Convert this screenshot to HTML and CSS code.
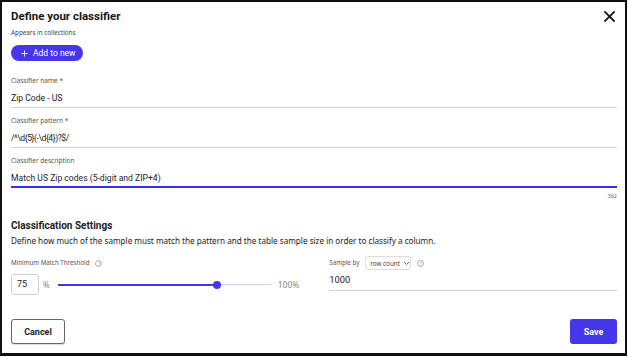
FILE: index.html
```html
<!DOCTYPE html>
<html lang="en">
<head>
<meta charset="utf-8">
<title>Define your classifier</title>
<link rel="stylesheet" href="styles.css">
</head>
<body>
<div class="frame">
  <div class="header">
    <h1 class="title">Define your classifier</h1>
    <button class="close" aria-label="Close">
      <svg width="11" height="11" viewBox="0 0 11 11"><path d="M1 1L10 10M10 1L1 10" stroke="#1a1a1a" stroke-width="1.8" stroke-linecap="square"/></svg>
    </button>
  </div>
  <div class="small-label">Appears in collections</div>
  <button class="pill">
    <svg width="7" height="7" viewBox="0 0 8 8"><path d="M4 0.5V7.5M0.5 4H7.5" stroke="#fff" stroke-width="1"/></svg>
    <span>Add to new</span>
  </button>

  <div class="field first">
    <div class="label">Classifier name *</div>
    <div class="value">Zip Code - US</div>
  </div>
  <div class="field">
    <div class="label">Classifier pattern *</div>
    <div class="value pattern">/^\d{5}(-\d{4})?$/</div>
  </div>
  <div class="field active">
    <div class="label">Classifier description</div>
    <div class="value">Match US Zip codes (5-digit and ZIP+4)</div>
  </div>
  <div class="counter">362</div>

  <h2 class="section-title">Classification Settings</h2>
  <p class="section-desc">Define how much of the sample must match the pattern and the table sample size in order to classify a column.</p>

  <div class="settings">
    <div class="col">
      <div class="row-label">
        <span class="label strong">Minimum Match Threshold</span>
        <span class="help">?</span>
      </div>
      <div class="threshold">
        <div class="num-input">75</div>
        <span class="pct">%</span>
        <div class="slider">
          <div class="fill" style="width:75%"></div>
          <div class="thumb" style="left:75%"></div>
        </div>
        <span class="max">100%</span>
      </div>
    </div>
    <div class="col">
      <div class="row-label">
        <span class="label strong">Sample by</span>
        <span class="select">row count
          <svg width="7" height="5" viewBox="0 0 7 5"><path d="M1 1L3.5 3.5L6 1" stroke="#555" stroke-width="0.9" fill="none"/></svg>
        </span>
        <span class="help">?</span>
      </div>
      <div class="sample-value">1000</div>
    </div>
  </div>

  <div class="footer">
    <button class="btn cancel">Cancel</button>
    <button class="btn save">Save</button>
  </div>
</div>
</body>
</html>
```
FILE: styles.css
```css
* { box-sizing: border-box; }
html, body { margin: 0; padding: 0; background: #fff; }
body {
  width: 628px;
  height: 358px;
  font-family: "Noto Sans", "Open Sans", sans-serif;
  color: #1c1c1c;
}
.frame {
  width: 627px;
  height: 356px;
  border: 2px solid #111;
  border-bottom-width: 3px;
  padding: 4px 8px 0 9px;
  display: flex;
  flex-direction: column;
}
.header {
  display: flex;
  justify-content: space-between;
  align-items: center;
  height: 20px;
}
.title {
  margin: 0;
  font-family: "Roboto", sans-serif;
  font-size: 11.5px;
  font-weight: 700;
  line-height: 20px;
  color: #161616;
}
.close {
  border: 0;
  background: none;
  padding: 0;
  margin-right: 2px;
  width: 11px;
  height: 11px;
  display: flex;
}
.small-label {
  margin-top: 2px;
  font-size: 6.3px;
  line-height: 10px;
  color: #444;
}
.pill {
  margin-top: 7px;
  align-self: flex-start;
  height: 16px;
  width: 72px;
  border: 0;
  border-radius: 8px;
  background: #4636e9;
  color: #fff;
  font-family: "Roboto", sans-serif;
  font-size: 8.5px;
  white-space: nowrap;
  display: flex;
  align-items: center;
  gap: 5px;
  padding: 0 0 0 10px;
}
.field {
  margin-top: 8px;
  border-bottom: 1px solid #cfcfcf;
  padding-bottom: 2px;
}
.field.first { margin-top: 15px; }
.field.active {
  border-bottom: 2px solid #3a2ee6;
  padding-bottom: 1px;
}
.label {
  font-size: 6.5px;
  line-height: 10px;
  color: #555;
}
.value {
  margin-top: 5px;
  font-family: "Roboto", sans-serif;
  font-size: 8.6px;
  line-height: 14px;
  color: #1c1c1c;
}
.value.pattern { letter-spacing: -0.45px; }
.counter {
  margin-top: 4px;
  text-align: right;
  font-size: 5.5px;
  line-height: 8px;
  color: #666;
}
.section-title {
  margin: 19px 0 0;
  font-family: "Roboto", sans-serif;
  font-size: 10px;
  font-weight: 700;
  line-height: 14px;
  color: #1c1c1c;
}
.section-desc {
  margin: 3px 0 0;
  font-size: 8.15px;
  line-height: 10px;
  color: #222;
}
.settings {
  margin-top: 10px;
  display: grid;
  grid-template-columns: 1fr 1fr;
  gap: 30px;
}
.row-label {
  height: 14px;
  display: flex;
  align-items: center;
  gap: 6px;
}
.label.strong { color: #555; font-size: 6.2px; }
.help {
  width: 7px;
  height: 7px;
  border: 0.7px solid #aaa;
  border-radius: 50%;
  font-size: 5px;
  line-height: 6px;
  text-align: center;
  color: #999;
}
.threshold {
  margin-top: 4px;
  display: flex;
  align-items: center;
  height: 21px;
}
.num-input {
  width: 28px;
  height: 21px;
  border: 1px solid #cfcfcf;
  border-radius: 3px;
  font-family: "Roboto", sans-serif;
  font-size: 9px;
  line-height: 19px;
  padding-left: 5px;
}
.pct {
  margin-left: 4px;
  font-size: 8px;
  color: #888;
}
.slider {
  position: relative;
  margin-left: 8px;
  width: 213px;
  height: 1px;
  background: #cfc9f7;
}
.fill {
  position: absolute;
  left: 0;
  top: -0.5px;
  height: 2px;
  background: #4636e9;
}
.thumb {
  position: absolute;
  top: -3.5px;
  width: 8px;
  height: 8px;
  margin-left: -4px;
  border-radius: 50%;
  background: #4636e9;
}
.max {
  margin-left: 7px;
  font-size: 8.5px;
  color: #888;
}
.select {
  height: 14px;
  width: 46px;
  border: 1px solid #ddd;
  border-radius: 3px;
  font-size: 6.3px;
  color: #444;
  white-space: nowrap;
  display: flex;
  align-items: center;
  gap: 3px;
  padding-left: 4px;
}
.sample-value {
  margin-top: 3px;
  font-family: "Roboto", sans-serif;
  font-size: 9.3px;
  line-height: 14px;
  padding-bottom: 3px;
  border-bottom: 1px solid #cfcfcf;
}
.footer {
  margin-top: 24px;
  display: flex;
  justify-content: space-between;
}
.btn {
  height: 25px;
  border-radius: 3px;
  font-family: "Roboto", sans-serif;
  font-size: 9px;
  font-weight: 700;
}
.cancel {
  width: 54px;
  background: #fff;
  border: 1px solid #666;
  color: #1c1c1c;
  box-shadow: 0 1px 1px rgba(0,0,0,0.15);
}
.save {
  width: 47px;
  border: 0;
  background: #4636e9;
  color: #fff;
}
```
